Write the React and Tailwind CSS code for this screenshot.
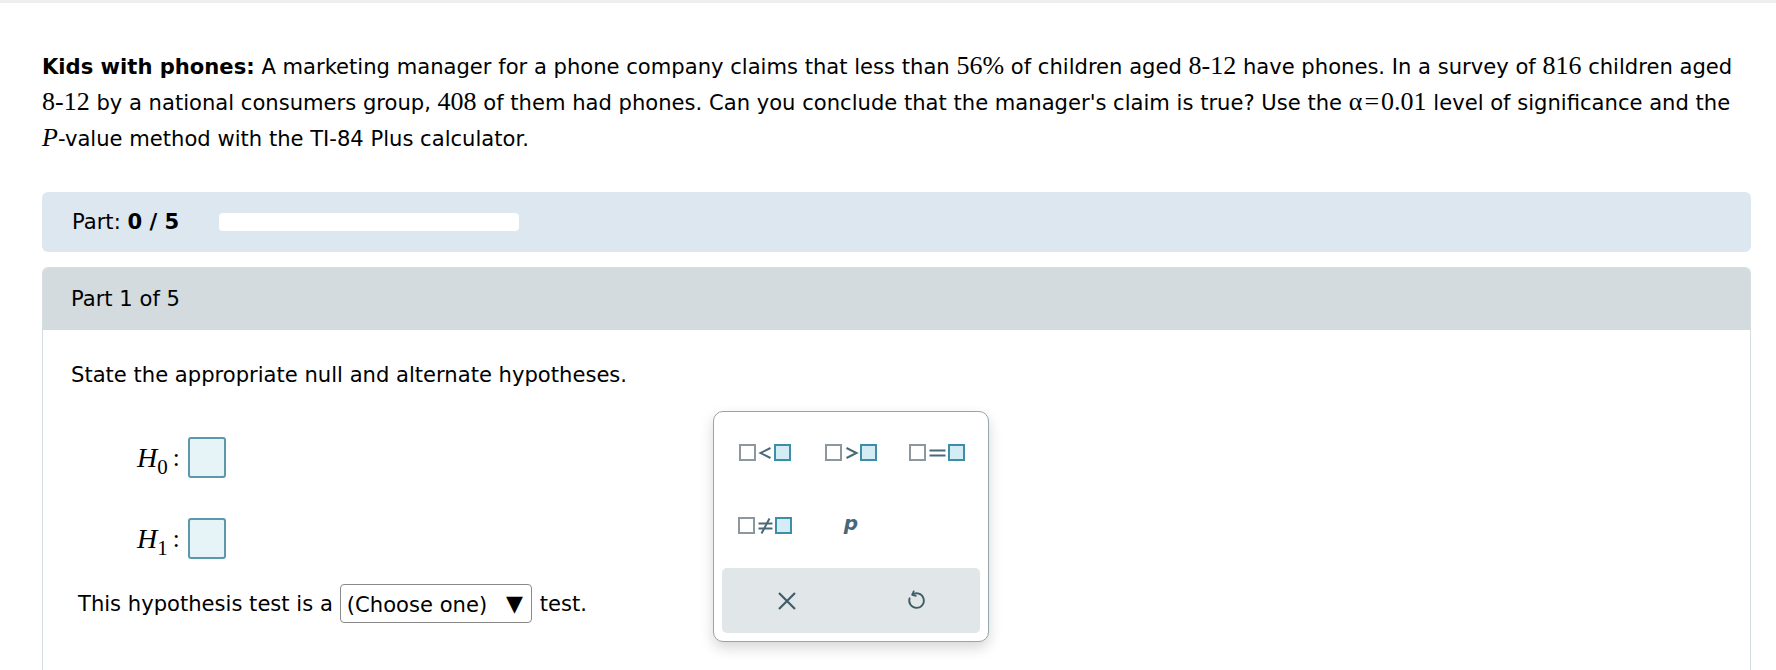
import React from "react";

const M = ({ children }) => (
  <span className="font-['Liberation_Serif',serif] text-[26px] leading-none">{children}</span>
);

function RelIcon({ op, w = 52 }) {
  const g = 1;
  const b = w - 16;
  const mid = (17 + b) / 2;
  let sym = null;
  const st = { stroke: "#4a6976", strokeWidth: 2, fill: "none", strokeLinecap: "butt" };
  if (op === "<") sym = <polyline points={`${mid + 5},4 ${mid - 5},9 ${mid + 5},14`} {...st} />;
  if (op === ">") sym = <polyline points={`${mid - 5},4 ${mid + 5},9 ${mid - 5},14`} {...st} />;
  if (op === "=")
    sym = (
      <g {...st}>
        <line x1={mid - 8} y1={6.5} x2={mid + 8} y2={6.5} />
        <line x1={mid - 8} y1={11.5} x2={mid + 8} y2={11.5} />
      </g>
    );
  if (op === "!=")
    sym = (
      <g {...st}>
        <line x1={mid - 7} y1={6.5} x2={mid + 7} y2={6.5} />
        <line x1={mid - 7} y1={11.5} x2={mid + 7} y2={11.5} />
        <line x1={mid + 4} y1={1.5} x2={mid - 4} y2={16.5} />
      </g>
    );
  return (
    <svg width={w} height={18} viewBox={`0 0 ${w} 18`}>
      <rect x={g} y={1} width={15} height={15} fill="#ffffff" stroke="#8c989d" strokeWidth={2} />
      {sym}
      <rect x={b} y={1} width={15} height={15} fill="#d4ecf3" stroke="#3d8ea9" strokeWidth={2} />
    </svg>
  );
}

function PalBtn({ children }) {
  return <div className="flex h-[50px] items-center justify-center">{children}</div>;
}

function HRow({ sub }) {
  return (
    <div className="flex items-center">
      <span className="font-['Liberation_Serif',serif] text-[28px] italic leading-none">H</span>
      <span className="mt-[20px] font-['Liberation_Serif',serif] text-[21px] leading-none">{sub}</span>
      <span className="ml-[5px] font-['Liberation_Serif',serif] text-[25px] leading-none">:</span>
      <div className="ml-[8px] h-[41px] w-[38px] rounded-[3px] border-2 border-[#5b98a9] bg-[#e7f4f7]" />
    </div>
  );
}

export default function App() {
  return (
    <div className="min-h-[670px] overflow-hidden bg-white font-['DejaVu_Sans',sans-serif] text-[21.1px] text-black">
      <div className="h-[3px] bg-[#eeeeee]" />
      <div className="w-[1751px] pl-[42px]">
        <p className="mt-[46px] leading-[36px]">
          <b>Kids with phones:</b> A marketing manager for a phone company claims that less than <M>56%</M> of
          children aged <M>8-12</M> have phones. In a survey of <M>816</M> children aged <M>8-12</M> by a national
          consumers group, <M>408</M> of them had phones. Can you conclude that the manager's claim is true? Use the{" "}
          <M>
            α<span className="mx-[2px]">=</span>0.01
          </M>{" "}
          level of significance and the <M><i>P</i></M>-value method with the TI-84 Plus calculator.
        </p>

        <div className="mt-[35px] flex h-[60px] items-center rounded-[6px] bg-[#dde7f0] pl-[30px]">
          <span>
            Part: <b>0 / 5</b>
          </span>
          <div className="ml-[40px] h-[18px] w-[300px] rounded-[4px] bg-white" />
        </div>

        <div className="mt-[15px] rounded-t-[6px] border border-b-0 border-[#d5dde1]">
          <div className="flex h-[62px] items-center rounded-t-[5px] bg-[#d3dbdf] pl-[28px]">Part 1 of 5</div>
          <div className="relative h-[360px] bg-white">
            <p className="pl-[28px] pt-[27px] leading-[36px]">State the appropriate null and alternate hypotheses.</p>
            <div className="ml-[94px] mt-[44px] flex flex-col gap-[40px]">
              <HRow sub="0" />
              <HRow sub="1" />
            </div>
            <div className="ml-[35px] mt-[25px] flex items-center">
              <span>This hypothesis test is a</span>
              <div className="ml-[7px] flex h-[39px] w-[192px] items-center justify-between rounded-[4px] border border-[#8a8a8a] pl-[6px] pr-[8px]">
                <span className="mt-[3px]">(Choose one)</span>
                <span className="text-[22px]">▼</span>
              </div>
              <span className="ml-[8px]">test.</span>
            </div>

            <div className="absolute left-[670px] top-[81px] w-[276px] rounded-[10px] border border-[#93a6ad] bg-white px-[8px] pb-[8px] pt-[16px] shadow-[0_6px_14px_rgba(0,0,0,0.16)]">
              <div className="grid grid-cols-3 gap-y-[23px]">
                <PalBtn>
                  <RelIcon op="<" />
                </PalBtn>
                <PalBtn>
                  <RelIcon op=">" />
                </PalBtn>
                <PalBtn>
                  <RelIcon op="=" w={56} />
                </PalBtn>
                <PalBtn>
                  <RelIcon op="!=" w={54} />
                </PalBtn>
                <PalBtn>
                  <span className="-mt-[6px] font-['DejaVu_Sans',sans-serif] text-[20px] font-bold italic leading-none text-[#46687a]">p</span>
                </PalBtn>
                <div />
              </div>
              <div className="mt-[17px] grid h-[65px] grid-cols-2 rounded-[5px] bg-[#e1e6e8]">
                <div className="flex items-center justify-center">
                  <svg width="20" height="20" viewBox="0 0 20 20">
                    <path d="M2 2 L18 18 M18 2 L2 18" stroke="#3f5d69" strokeWidth="2.2" fill="none" />
                  </svg>
                </div>
                <div className="flex items-center justify-center">
                  <svg width="22" height="22" viewBox="0 0 24 24" fill="none" stroke="#3f5d69" strokeWidth="2" strokeLinecap="round" strokeLinejoin="round">
                    <path d="M8 5 A8 8 0 1 1 5 9" />
                    <path d="M9.5 1.5 L8 5.2 L11.8 6.3" />
                  </svg>
                </div>
              </div>
            </div>
          </div>
        </div>
      </div>
    </div>
  );
}
